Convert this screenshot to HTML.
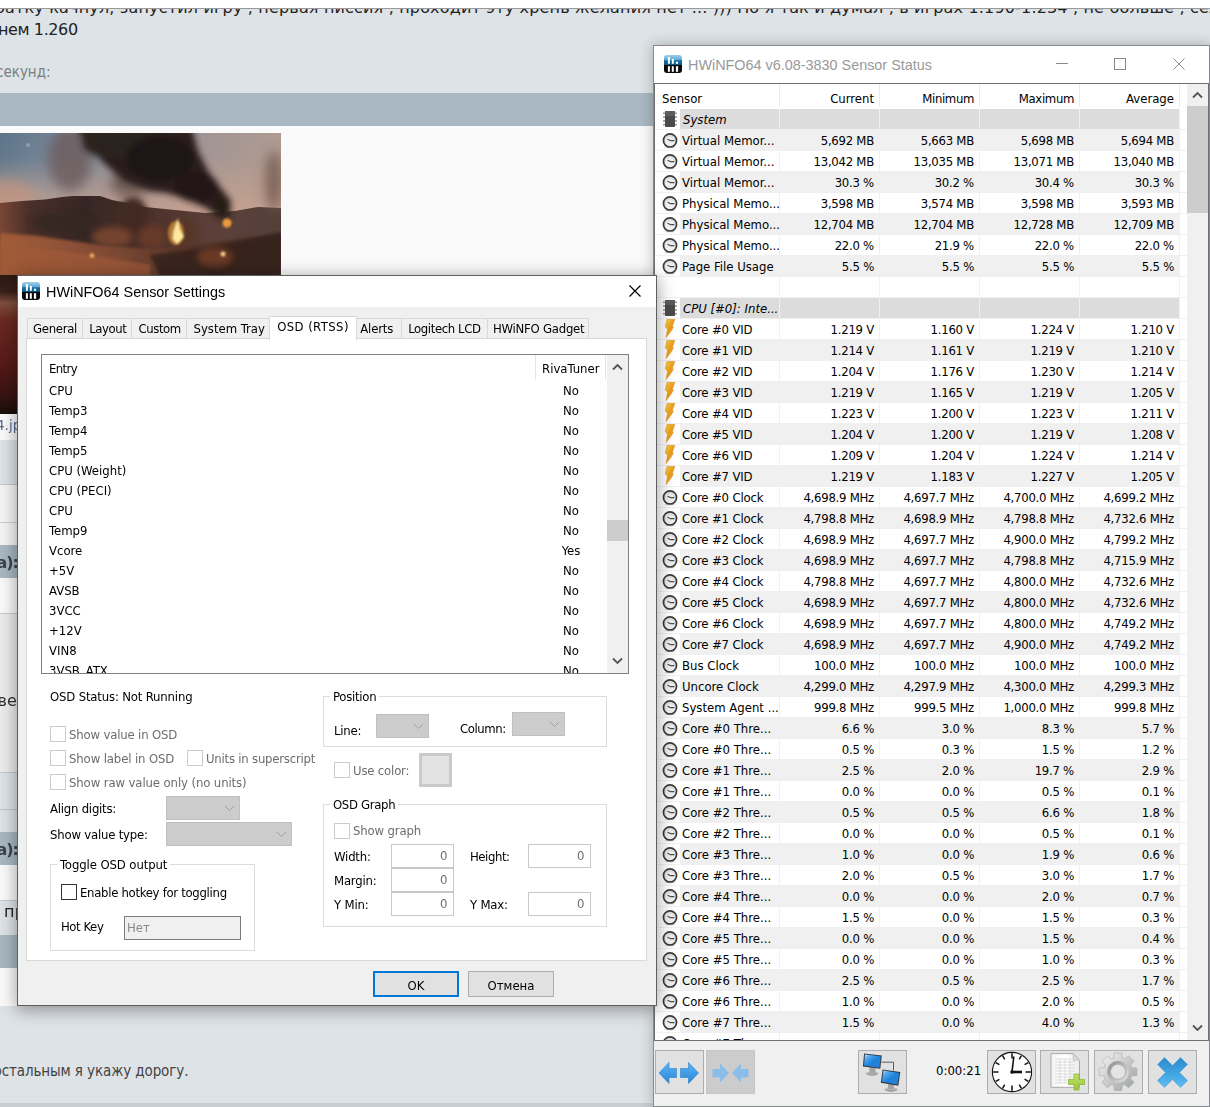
<!DOCTYPE html>
<html lang="ru"><head><meta charset="utf-8"><title>HWiNFO64</title>
<style>
*{box-sizing:border-box;margin:0;padding:0}
html,body{width:1210px;height:1107px;overflow:hidden;background:#dee3e7}
body{position:relative;font-family:"DejaVu Sans Condensed","Liberation Sans",sans-serif;font-size:13px;color:#000}
.a{position:absolute}
.t{position:absolute;white-space:pre;line-height:16px;height:16px}
.f{font-family:"DejaVu Sans","Liberation Sans",sans-serif;font-size:16px;letter-spacing:.17px;color:#333}
.ui{font-family:"DejaVu Sans Condensed","Liberation Sans",sans-serif;font-size:13px}
.f2{font-family:"DejaVu Sans Condensed","Liberation Sans",sans-serif;font-size:15px;color:#333}
/* right window */
#rw{left:653px;top:45px;width:557px;height:1062px;background:#fff;border:1px solid #868a8e;box-shadow:0 0 12px 1px rgba(0,0,0,.22)}
.row{position:absolute;left:26px;height:20px;width:499px}
.cell{position:absolute;top:0;height:20px}
.v{position:absolute;white-space:pre;line-height:16px;height:16px;text-align:right;width:94px;letter-spacing:-.25px}
.btn{position:absolute;top:1050px;height:44px;border:1px solid #adadad;background:#e1e1e1}
/* dialog */
#dlg{left:17px;top:275px;width:640px;height:731px;background:#f0f0f0;border:1px solid #5f5f5f;box-shadow:0 3px 16px 1px rgba(0,0,0,.36)}
.tab{position:absolute;top:318px;height:21px;border:1px solid #d9d9d9;border-bottom:none;background:#f0f0f0}
.cb{position:absolute;width:16px;height:16px;border:1px solid #ccc;background:#fff}
.gb{position:absolute;border:1px solid #dcdcdc}
.cmb{position:absolute;background:#ccc;border:1px solid #bfbfbf}
.inp{position:absolute;border:1px solid #c8c8c8;background:#fff}
.dis{color:#6d6d6d}
.ttl{font-family:"Liberation Sans","DejaVu Sans",sans-serif;font-size:14.4px;line-height:18px;height:18px}
</style></head>
<body>
<div class="a" style="left:0;top:0;width:1210px;height:9px;background:#fff"></div>
<div class="a" style="left:0;top:8px;width:1210px;height:1px;background:#9a9a9a"></div>
<div class="a" style="left:0;top:9px;width:1210px;height:14px;overflow:hidden"><div class="t f" style="left:-5px;top:-11px;line-height:20px;height:20px;color:#222">батку качнул, запустил игру , первая писсия , проходит эту хрень желания нет ... ))) Но я так и думал , в играх 1.190-1.234 , не больше , сел</div></div>
<div class="t f" style="left:-2px;top:20px;line-height:20px;height:20px;letter-spacing:-.4px;color:#222">нем 1.260</div>
<div class="t f2" style="left:-4px;top:62px;line-height:20px;height:20px;color:#7b7f83">секунд:</div>
<div class="a" style="left:0;top:93px;width:654px;height:33px;background:#a9b8c2"></div>
<div class="a" style="left:0;top:126px;width:654px;height:880px;background:#fafafa"></div>
<div class="a" id="img" style="left:0;top:133px;width:281px;height:282px;overflow:hidden;background:#6b4a3c"><svg width="281" height="282" viewBox="0 0 281 282"><defs>
<linearGradient id="sky" x1="0" y1="0" x2="1" y2=".2"><stop offset="0" stop-color="#5d7489"/><stop offset=".3" stop-color="#7f8c9b"/><stop offset=".6" stop-color="#9b9296"/><stop offset="1" stop-color="#b09b91"/></linearGradient>
<linearGradient id="hz" x1="0" y1="0" x2="0" y2="1"><stop offset="0" stop-color="#c3a08f" stop-opacity="0"/><stop offset="1" stop-color="#c5a08e" stop-opacity=".9"/></linearGradient>
<linearGradient id="gr" x1="0" y1="0" x2="1" y2="0"><stop offset="0" stop-color="#a25c39"/><stop offset=".4" stop-color="#7e4a35"/><stop offset=".7" stop-color="#4e3026"/><stop offset="1" stop-color="#3d2820"/></linearGradient>
<linearGradient id="mt" x1="0" y1="0" x2="1" y2="0"><stop offset="0" stop-color="#7a4636"/><stop offset=".1" stop-color="#4b302a"/><stop offset=".3" stop-color="#352624"/><stop offset=".5" stop-color="#4a3029"/><stop offset=".75" stop-color="#5c4039"/><stop offset="1" stop-color="#54403a"/></linearGradient>
<linearGradient id="strip" x1="0" y1="0" x2="0" y2="1"><stop offset="0" stop-color="#2c1a14"/><stop offset=".12" stop-color="#3a2018"/><stop offset=".2" stop-color="#7e4f3d"/><stop offset=".32" stop-color="#6a2a22"/><stop offset=".6" stop-color="#5a1b18"/><stop offset=".85" stop-color="#3a1412"/><stop offset="1" stop-color="#170d0b"/></linearGradient>
<filter id="bl" x="-30%" y="-30%" width="160%" height="160%"><feGaussianBlur stdDeviation="3"/></filter>
<filter id="bl2" x="-30%" y="-30%" width="160%" height="160%"><feGaussianBlur stdDeviation="1.6"/></filter>
<filter id="bl3" x="-50%" y="-50%" width="200%" height="200%"><feGaussianBlur stdDeviation=".9"/></filter>
<filter id="bl5" x="-30%" y="-30%" width="160%" height="160%"><feGaussianBlur stdDeviation="6"/></filter>
</defs>
<rect width="281" height="90" fill="url(#sky)"/>
<rect y="25" width="281" height="55" fill="url(#hz)"/>
<ellipse cx="0" cy="62" rx="36" ry="16" fill="#c9957e" opacity=".6" filter="url(#bl5)"/>
<path d="M0 70L22 68L45 66.5L62 64L72 63H100L112 67L128 70L145 74L175 77L205 80L235 78L258 74L281 75V120H0Z" fill="url(#mt)"/>
<path d="M0 100L40 103L100 112L150 116L200 112L281 100V143H0Z" fill="url(#gr)" filter="url(#bl2)"/>
<path d="M0 110L70 119L150 132L150 143H0Z" fill="#a05a38" opacity=".7" filter="url(#bl2)"/>
<path d="M150 122L215 114L281 100V143H160Z" fill="#35221c" opacity=".85" filter="url(#bl2)"/>
<g filter="url(#bl5)"><ellipse cx="70" cy="26" rx="22" ry="32" fill="#6a5a5a" opacity=".8"/><ellipse cx="130" cy="50" rx="20" ry="14" fill="#5a4640" opacity=".7"/><ellipse cx="274" cy="48" rx="9" ry="30" fill="#735950" opacity=".8"/></g>
<g filter="url(#bl)">
<path d="M76 -5L192 -5L198 18L208 38L220 54L231 68L230 84L218 84L208 76L186 66L166 60L150 58L124 48L106 32L90 16Z" fill="#2a1f1c"/>
<ellipse cx="118" cy="10" rx="36" ry="16" fill="#2c211e"/>
<ellipse cx="160" cy="26" rx="34" ry="22" fill="#1f1715"/>
<ellipse cx="196" cy="54" rx="22" ry="15" fill="#211815"/>
<ellipse cx="222" cy="74" rx="8" ry="12" fill="#281c18"/>
<ellipse cx="133" cy="84" rx="15" ry="20" fill="#432a22"/>
<ellipse cx="112" cy="104" rx="20" ry="10" fill="#7a4530" opacity=".9"/>
<ellipse cx="152" cy="104" rx="14" ry="12" fill="#6a3b29" opacity=".9"/>
<ellipse cx="180" cy="100" rx="16" ry="14" fill="#583323" opacity=".8"/>
<ellipse cx="215" cy="124" rx="18" ry="10" fill="#764028" opacity=".8"/>
<ellipse cx="60" cy="90" rx="30" ry="10" fill="#33241f" opacity=".8"/>
</g>
<g filter="url(#bl3)"><ellipse cx="176" cy="100" rx="8" ry="12" fill="#d9983f" opacity=".7"/><path d="M173.500 98L178 85L180 96L184 104L177 111L172.500 106Z" fill="#ffe9a0"/><circle cx="227" cy="90" r="4.500" fill="#ee9a3c"/><circle cx="92" cy="122.500" r="2.200" fill="#f7b468"/><circle cx="223" cy="121" r="2.500" fill="#fbc98a"/><circle cx="28" cy="12" r="1.200" fill="#dfe8f0"/></g>
<rect x="0" y="142" width="281" height="140" fill="url(#strip)"/>
</svg></div>
<div class="a" style="left:0;top:414px;width:30px;height:26px;background:#fafafa"></div>
<div class="a" style="left:0;top:440px;width:30px;height:44px;background:#dee3e7"></div>
<div class="a" style="left:0;top:484px;width:30px;height:1px;background:#c9c9c9"></div>
<div class="a" style="left:0;top:485px;width:30px;height:37px;background:#f5f5f5"></div>
<div class="a" style="left:0;top:522px;width:30px;height:1px;background:#d0d0d0"></div>
<div class="a" style="left:0;top:523px;width:30px;height:22px;background:#f5f5f5"></div>
<div class="a" style="left:0;top:545px;width:30px;height:33px;background:#a9b8c2"></div>
<div class="a" style="left:0;top:578px;width:30px;height:35px;background:#fafafa"></div>
<div class="a" style="left:0;top:613px;width:30px;height:1px;background:#c9c9c9"></div>
<div class="a" style="left:0;top:614px;width:30px;height:158px;background:#ececec"></div>
<div class="a" style="left:0;top:772px;width:30px;height:1px;background:#c0c6cb"></div>
<div class="a" style="left:0;top:773px;width:30px;height:36px;background:#dee3e7"></div>
<div class="a" style="left:0;top:809px;width:30px;height:1px;background:#c0c6cb"></div>
<div class="a" style="left:0;top:810px;width:30px;height:22px;background:#dee3e7"></div>
<div class="a" style="left:0;top:832px;width:30px;height:33px;background:#a9b8c2"></div>
<div class="a" style="left:0;top:865px;width:30px;height:35px;background:#fafafa"></div>
<div class="a" style="left:0;top:900px;width:30px;height:1px;background:#c9c9c9"></div>
<div class="a" style="left:0;top:901px;width:30px;height:34px;background:#dee3e7"></div>
<div class="a" style="left:0;top:935px;width:30px;height:33px;background:#a9b8c2"></div>
<div class="a" style="left:0;top:968px;width:30px;height:38px;background:#fafafa"></div>
<div class="t f" style="left:-4px;top:415px;line-height:20px;height:20px;font-size:13.5px;letter-spacing:0;color:#56688c">4.jpg</div>
<div class="t f" style="left:-3.500px;top:552.500px;line-height:20px;height:20px;font-weight:bold;letter-spacing:-1px;color:#3a4650">а):</div>
<div class="t f" style="left:-2.500px;top:691px;line-height:20px;height:20px;color:#333">вел</div>
<div class="t f" style="left:-3.500px;top:839.500px;line-height:20px;height:20px;font-weight:bold;letter-spacing:-1px;color:#3a4650">а):</div>
<div class="t f" style="left:4px;top:902px;line-height:20px;height:20px;color:#222">пр</div>
<div class="a" style="left:0;top:1006px;width:654px;height:101px;background:#dee3e7"></div>
<div class="a" style="left:0;top:1103px;width:1210px;height:4px;background:#c8cdd2"></div>
<div class="t f2" style="left:-6.5px;top:1061px;line-height:20px;height:20px;letter-spacing:-.1px;color:#444">остальным я укажу дорогу.</div>
<div class="a" id="rw">
<div class="a" style="left:10px;top:9px;width:18px;height:18px" id="ico1"><svg width="18" height="18" viewBox="0 0 18 18"><defs><linearGradient id="ag1" x1="0" y1="0" x2="0" y2="1"><stop offset="0" stop-color="#9fcde6"/><stop offset=".52" stop-color="#5aa6d2"/><stop offset=".56" stop-color="#0f6fa0"/><stop offset="1" stop-color="#0a5c8c"/></linearGradient><clipPath id="ac1"><rect x="0" y="0" width="18" height="18" rx="3" ry="3"/></clipPath></defs><g clip-path="url(#ac1)"><rect width="18" height="10" fill="url(#ag1)"/><rect y="9.9" width="18" height="8.1" fill="#0a0a0a"/><rect x="3.9" y="1.9" width="2" height="6.9" fill="#fff"/><rect x="7.8" y="4" width="2" height="4.8" fill="#fff"/><rect x="11.9" y="6.7" width="2.2" height="2.1" fill="#fff"/><rect x="3.9" y="11.2" width="2" height="5.6" fill="#fff"/><rect x="7.8" y="11.2" width="2" height="5.6" fill="#fff"/><rect x="11.9" y="11.2" width="2.2" height="5.6" fill="#fff"/></g></svg></div>
<div class="t ttl" style="left:34px;top:10px;color:#999">HWiNFO64 v6.08-3830 Sensor Status</div>
<div class="a" style="left:402px;top:17px;width:12px;height:1px;background:#8a8a8a"></div>
<div class="a" style="left:460px;top:12px;width:12px;height:12px;border:1px solid #8a8a8a"></div>
<svg class="a" style="left:519px;top:12px" width="12" height="12" viewBox="0 0 12 12"><path d="M0.5 0.5L11.5 11.5M11.5 0.5L0.5 11.5" stroke="#8a8a8a" stroke-width="1" fill="none"/></svg>
<div class="a" style="left:0;top:37px;width:555px;height:958px;border:1px solid #6f6f6f"></div>
<div class="t ui" style="left:8px;top:45px;">Sensor</div>
<div class="v" style="left:126px;top:45px;letter-spacing:0px">Current</div>
<div class="v" style="left:226px;top:45px;letter-spacing:-0.35px">Minimum</div>
<div class="v" style="left:326px;top:45px;letter-spacing:-0.35px">Maximum</div>
<div class="v" style="left:426px;top:45px;letter-spacing:0px">Average</div>
<div class="a" style="left:125px;top:38px;width:1px;height:24px;background:#ebebeb"></div>
<div class="a" style="left:225px;top:38px;width:1px;height:24px;background:#ebebeb"></div>
<div class="a" style="left:325px;top:38px;width:1px;height:24px;background:#ebebeb"></div>
<div class="a" style="left:425px;top:38px;width:1px;height:24px;background:#ebebeb"></div>
<div class="a" style="left:525px;top:38px;width:1px;height:24px;background:#ebebeb"></div>
<div class="a" style="left:26px;top:63px;width:500px;height:20px;background:#dcdcdc"></div>
<div class="a" style="left:1px;top:83px;width:532px;height:1px;background:#f0f0f0"></div>
<div class="a" style="left:0;top:63px;width:534px;height:20px;overflow:hidden">
<div class="a" style="left:8px;top:1px;width:16px;height:18px"><svg width="16" height="18" viewBox="0 0 16 18"><g fill="#9a9a9a"><rect x="1" y="2.5" width="14" height="1.6"/><rect x="1" y="6.3" width="14" height="1.6"/><rect x="1" y="10.1" width="14" height="1.6"/><rect x="1" y="13.9" width="14" height="1.6"/></g><rect x="3" y="1" width="10" height="16" rx=".8" fill="#4a4a4a"/><rect x="3" y="1" width="10" height="5" rx=".8" fill="#5c5c5c"/></svg></div>
<div class="t" style="left:29px;top:3px;font-style:italic">System</div>
</div>
<div class="a" style="left:26px;top:84px;width:500px;height:20px;background:#f0f0f0"></div>
<div class="a" style="left:1px;top:104px;width:532px;height:1px;background:#f0f0f0"></div>
<div class="a" style="left:0;top:84px;width:534px;height:20px;overflow:hidden">
<div class="a" style="left:8px;top:2px;width:16px;height:17px"><svg width="16" height="17" viewBox="0 0 16 17"><ellipse cx="8" cy="15.4" rx="5.5" ry="1" fill="#000" opacity=".12"/><circle cx="8" cy="8.4" r="6.55" fill="#dcdfe2" stroke="#3a3a3a" stroke-width="1.7"/><circle cx="8" cy="9.6" r="4.6" fill="#efefef"/><path d="M8.2 8.5L5.5 7.2M8.2 8.6H12.3" stroke="#4a4a4a" stroke-width="1.1" fill="none"/></svg></div>
<div class="t" style="left:28px;top:3px">Virtual Memor...</div>
<div class="v" style="left:126px;top:3px">5,692 MB</div>
<div class="v" style="left:226px;top:3px">5,663 MB</div>
<div class="v" style="left:326px;top:3px">5,698 MB</div>
<div class="v" style="left:426px;top:3px">5,694 MB</div>
</div>
<div class="a" style="left:1px;top:125px;width:532px;height:1px;background:#f0f0f0"></div>
<div class="a" style="left:0;top:105px;width:534px;height:20px;overflow:hidden">
<div class="a" style="left:8px;top:2px;width:16px;height:17px"><svg width="16" height="17" viewBox="0 0 16 17"><ellipse cx="8" cy="15.4" rx="5.5" ry="1" fill="#000" opacity=".12"/><circle cx="8" cy="8.4" r="6.55" fill="#dcdfe2" stroke="#3a3a3a" stroke-width="1.7"/><circle cx="8" cy="9.6" r="4.6" fill="#efefef"/><path d="M8.2 8.5L5.5 7.2M8.2 8.6H12.3" stroke="#4a4a4a" stroke-width="1.1" fill="none"/></svg></div>
<div class="t" style="left:28px;top:3px">Virtual Memor...</div>
<div class="v" style="left:126px;top:3px">13,042 MB</div>
<div class="v" style="left:226px;top:3px">13,035 MB</div>
<div class="v" style="left:326px;top:3px">13,071 MB</div>
<div class="v" style="left:426px;top:3px">13,040 MB</div>
</div>
<div class="a" style="left:26px;top:126px;width:500px;height:20px;background:#f0f0f0"></div>
<div class="a" style="left:1px;top:146px;width:532px;height:1px;background:#f0f0f0"></div>
<div class="a" style="left:0;top:126px;width:534px;height:20px;overflow:hidden">
<div class="a" style="left:8px;top:2px;width:16px;height:17px"><svg width="16" height="17" viewBox="0 0 16 17"><ellipse cx="8" cy="15.4" rx="5.5" ry="1" fill="#000" opacity=".12"/><circle cx="8" cy="8.4" r="6.55" fill="#dcdfe2" stroke="#3a3a3a" stroke-width="1.7"/><circle cx="8" cy="9.6" r="4.6" fill="#efefef"/><path d="M8.2 8.5L5.5 7.2M8.2 8.6H12.3" stroke="#4a4a4a" stroke-width="1.1" fill="none"/></svg></div>
<div class="t" style="left:28px;top:3px">Virtual Memor...</div>
<div class="v" style="left:126px;top:3px">30.3 %</div>
<div class="v" style="left:226px;top:3px">30.2 %</div>
<div class="v" style="left:326px;top:3px">30.4 %</div>
<div class="v" style="left:426px;top:3px">30.3 %</div>
</div>
<div class="a" style="left:1px;top:167px;width:532px;height:1px;background:#f0f0f0"></div>
<div class="a" style="left:0;top:147px;width:534px;height:20px;overflow:hidden">
<div class="a" style="left:8px;top:2px;width:16px;height:17px"><svg width="16" height="17" viewBox="0 0 16 17"><ellipse cx="8" cy="15.4" rx="5.5" ry="1" fill="#000" opacity=".12"/><circle cx="8" cy="8.4" r="6.55" fill="#dcdfe2" stroke="#3a3a3a" stroke-width="1.7"/><circle cx="8" cy="9.6" r="4.6" fill="#efefef"/><path d="M8.2 8.5L5.5 7.2M8.2 8.6H12.3" stroke="#4a4a4a" stroke-width="1.1" fill="none"/></svg></div>
<div class="t" style="left:28px;top:3px">Physical Memo...</div>
<div class="v" style="left:126px;top:3px">3,598 MB</div>
<div class="v" style="left:226px;top:3px">3,574 MB</div>
<div class="v" style="left:326px;top:3px">3,598 MB</div>
<div class="v" style="left:426px;top:3px">3,593 MB</div>
</div>
<div class="a" style="left:26px;top:168px;width:500px;height:20px;background:#f0f0f0"></div>
<div class="a" style="left:1px;top:188px;width:532px;height:1px;background:#f0f0f0"></div>
<div class="a" style="left:0;top:168px;width:534px;height:20px;overflow:hidden">
<div class="a" style="left:8px;top:2px;width:16px;height:17px"><svg width="16" height="17" viewBox="0 0 16 17"><ellipse cx="8" cy="15.4" rx="5.5" ry="1" fill="#000" opacity=".12"/><circle cx="8" cy="8.4" r="6.55" fill="#dcdfe2" stroke="#3a3a3a" stroke-width="1.7"/><circle cx="8" cy="9.6" r="4.6" fill="#efefef"/><path d="M8.2 8.5L5.5 7.2M8.2 8.6H12.3" stroke="#4a4a4a" stroke-width="1.1" fill="none"/></svg></div>
<div class="t" style="left:28px;top:3px">Physical Memo...</div>
<div class="v" style="left:126px;top:3px">12,704 MB</div>
<div class="v" style="left:226px;top:3px">12,704 MB</div>
<div class="v" style="left:326px;top:3px">12,728 MB</div>
<div class="v" style="left:426px;top:3px">12,709 MB</div>
</div>
<div class="a" style="left:1px;top:209px;width:532px;height:1px;background:#f0f0f0"></div>
<div class="a" style="left:0;top:189px;width:534px;height:20px;overflow:hidden">
<div class="a" style="left:8px;top:2px;width:16px;height:17px"><svg width="16" height="17" viewBox="0 0 16 17"><ellipse cx="8" cy="15.4" rx="5.5" ry="1" fill="#000" opacity=".12"/><circle cx="8" cy="8.4" r="6.55" fill="#dcdfe2" stroke="#3a3a3a" stroke-width="1.7"/><circle cx="8" cy="9.6" r="4.6" fill="#efefef"/><path d="M8.2 8.5L5.5 7.2M8.2 8.6H12.3" stroke="#4a4a4a" stroke-width="1.1" fill="none"/></svg></div>
<div class="t" style="left:28px;top:3px">Physical Memo...</div>
<div class="v" style="left:126px;top:3px">22.0 %</div>
<div class="v" style="left:226px;top:3px">21.9 %</div>
<div class="v" style="left:326px;top:3px">22.0 %</div>
<div class="v" style="left:426px;top:3px">22.0 %</div>
</div>
<div class="a" style="left:26px;top:210px;width:500px;height:20px;background:#f0f0f0"></div>
<div class="a" style="left:1px;top:230px;width:532px;height:1px;background:#f0f0f0"></div>
<div class="a" style="left:0;top:210px;width:534px;height:20px;overflow:hidden">
<div class="a" style="left:8px;top:2px;width:16px;height:17px"><svg width="16" height="17" viewBox="0 0 16 17"><ellipse cx="8" cy="15.4" rx="5.5" ry="1" fill="#000" opacity=".12"/><circle cx="8" cy="8.4" r="6.55" fill="#dcdfe2" stroke="#3a3a3a" stroke-width="1.7"/><circle cx="8" cy="9.6" r="4.6" fill="#efefef"/><path d="M8.2 8.5L5.5 7.2M8.2 8.6H12.3" stroke="#4a4a4a" stroke-width="1.1" fill="none"/></svg></div>
<div class="t" style="left:28px;top:3px">Page File Usage</div>
<div class="v" style="left:126px;top:3px">5.5 %</div>
<div class="v" style="left:226px;top:3px">5.5 %</div>
<div class="v" style="left:326px;top:3px">5.5 %</div>
<div class="v" style="left:426px;top:3px">5.5 %</div>
</div>
<div class="a" style="left:1px;top:251px;width:532px;height:1px;background:#f0f0f0"></div>
<div class="a" style="left:0;top:231px;width:534px;height:20px;overflow:hidden">
</div>
<div class="a" style="left:26px;top:252px;width:500px;height:20px;background:#dcdcdc"></div>
<div class="a" style="left:1px;top:272px;width:532px;height:1px;background:#f0f0f0"></div>
<div class="a" style="left:0;top:252px;width:534px;height:20px;overflow:hidden">
<div class="a" style="left:8px;top:1px;width:16px;height:18px"><svg width="16" height="18" viewBox="0 0 16 18"><g fill="#9a9a9a"><rect x="1" y="2.5" width="14" height="1.6"/><rect x="1" y="6.3" width="14" height="1.6"/><rect x="1" y="10.1" width="14" height="1.6"/><rect x="1" y="13.9" width="14" height="1.6"/></g><rect x="3" y="1" width="10" height="16" rx=".8" fill="#4a4a4a"/><rect x="3" y="1" width="10" height="5" rx=".8" fill="#5c5c5c"/></svg></div>
<div class="t" style="left:29px;top:3px;font-style:italic">CPU [#0]: Inte...</div>
</div>
<div class="a" style="left:1px;top:293px;width:532px;height:1px;background:#f0f0f0"></div>
<div class="a" style="left:0;top:273px;width:534px;height:20px;overflow:hidden">
<div class="a" style="left:8px;top:0px;width:16px;height:20px"><svg width="16" height="20" viewBox="0 0 16 20"><defs><linearGradient id="bg10" x1="0" y1="0" x2="1" y2="1"><stop offset="0" stop-color="#fbd743"/><stop offset=".5" stop-color="#ee9a1c"/><stop offset="1" stop-color="#f5c535"/></linearGradient></defs><path d="M5 .3H12.8L10.3 7.6L11.5 8L9 12.2L4 18.6L5.5 10.3L3.3 7.8Z" fill="url(#bg10)" stroke="#d58a1e" stroke-width=".5"/></svg></div>
<div class="t" style="left:28px;top:3px;letter-spacing:-.16px">Core #0 VID</div>
<div class="v" style="left:126px;top:3px">1.219 V</div>
<div class="v" style="left:226px;top:3px">1.160 V</div>
<div class="v" style="left:326px;top:3px">1.224 V</div>
<div class="v" style="left:426px;top:3px">1.210 V</div>
</div>
<div class="a" style="left:26px;top:294px;width:500px;height:20px;background:#f0f0f0"></div>
<div class="a" style="left:1px;top:314px;width:532px;height:1px;background:#f0f0f0"></div>
<div class="a" style="left:0;top:294px;width:534px;height:20px;overflow:hidden">
<div class="a" style="left:8px;top:0px;width:16px;height:20px"><svg width="16" height="20" viewBox="0 0 16 20"><defs><linearGradient id="bg11" x1="0" y1="0" x2="1" y2="1"><stop offset="0" stop-color="#fbd743"/><stop offset=".5" stop-color="#ee9a1c"/><stop offset="1" stop-color="#f5c535"/></linearGradient></defs><path d="M5 .3H12.8L10.3 7.6L11.5 8L9 12.2L4 18.6L5.5 10.3L3.3 7.8Z" fill="url(#bg11)" stroke="#d58a1e" stroke-width=".5"/></svg></div>
<div class="t" style="left:28px;top:3px;letter-spacing:-.16px">Core #1 VID</div>
<div class="v" style="left:126px;top:3px">1.214 V</div>
<div class="v" style="left:226px;top:3px">1.161 V</div>
<div class="v" style="left:326px;top:3px">1.219 V</div>
<div class="v" style="left:426px;top:3px">1.210 V</div>
</div>
<div class="a" style="left:1px;top:335px;width:532px;height:1px;background:#f0f0f0"></div>
<div class="a" style="left:0;top:315px;width:534px;height:20px;overflow:hidden">
<div class="a" style="left:8px;top:0px;width:16px;height:20px"><svg width="16" height="20" viewBox="0 0 16 20"><defs><linearGradient id="bg12" x1="0" y1="0" x2="1" y2="1"><stop offset="0" stop-color="#fbd743"/><stop offset=".5" stop-color="#ee9a1c"/><stop offset="1" stop-color="#f5c535"/></linearGradient></defs><path d="M5 .3H12.8L10.3 7.6L11.5 8L9 12.2L4 18.6L5.5 10.3L3.3 7.8Z" fill="url(#bg12)" stroke="#d58a1e" stroke-width=".5"/></svg></div>
<div class="t" style="left:28px;top:3px;letter-spacing:-.16px">Core #2 VID</div>
<div class="v" style="left:126px;top:3px">1.204 V</div>
<div class="v" style="left:226px;top:3px">1.176 V</div>
<div class="v" style="left:326px;top:3px">1.230 V</div>
<div class="v" style="left:426px;top:3px">1.214 V</div>
</div>
<div class="a" style="left:26px;top:336px;width:500px;height:20px;background:#f0f0f0"></div>
<div class="a" style="left:1px;top:356px;width:532px;height:1px;background:#f0f0f0"></div>
<div class="a" style="left:0;top:336px;width:534px;height:20px;overflow:hidden">
<div class="a" style="left:8px;top:0px;width:16px;height:20px"><svg width="16" height="20" viewBox="0 0 16 20"><defs><linearGradient id="bg13" x1="0" y1="0" x2="1" y2="1"><stop offset="0" stop-color="#fbd743"/><stop offset=".5" stop-color="#ee9a1c"/><stop offset="1" stop-color="#f5c535"/></linearGradient></defs><path d="M5 .3H12.8L10.3 7.6L11.5 8L9 12.2L4 18.6L5.5 10.3L3.3 7.8Z" fill="url(#bg13)" stroke="#d58a1e" stroke-width=".5"/></svg></div>
<div class="t" style="left:28px;top:3px;letter-spacing:-.16px">Core #3 VID</div>
<div class="v" style="left:126px;top:3px">1.219 V</div>
<div class="v" style="left:226px;top:3px">1.165 V</div>
<div class="v" style="left:326px;top:3px">1.219 V</div>
<div class="v" style="left:426px;top:3px">1.205 V</div>
</div>
<div class="a" style="left:1px;top:377px;width:532px;height:1px;background:#f0f0f0"></div>
<div class="a" style="left:0;top:357px;width:534px;height:20px;overflow:hidden">
<div class="a" style="left:8px;top:0px;width:16px;height:20px"><svg width="16" height="20" viewBox="0 0 16 20"><defs><linearGradient id="bg14" x1="0" y1="0" x2="1" y2="1"><stop offset="0" stop-color="#fbd743"/><stop offset=".5" stop-color="#ee9a1c"/><stop offset="1" stop-color="#f5c535"/></linearGradient></defs><path d="M5 .3H12.8L10.3 7.6L11.5 8L9 12.2L4 18.6L5.5 10.3L3.3 7.8Z" fill="url(#bg14)" stroke="#d58a1e" stroke-width=".5"/></svg></div>
<div class="t" style="left:28px;top:3px;letter-spacing:-.16px">Core #4 VID</div>
<div class="v" style="left:126px;top:3px">1.223 V</div>
<div class="v" style="left:226px;top:3px">1.200 V</div>
<div class="v" style="left:326px;top:3px">1.223 V</div>
<div class="v" style="left:426px;top:3px">1.211 V</div>
</div>
<div class="a" style="left:26px;top:378px;width:500px;height:20px;background:#f0f0f0"></div>
<div class="a" style="left:1px;top:398px;width:532px;height:1px;background:#f0f0f0"></div>
<div class="a" style="left:0;top:378px;width:534px;height:20px;overflow:hidden">
<div class="a" style="left:8px;top:0px;width:16px;height:20px"><svg width="16" height="20" viewBox="0 0 16 20"><defs><linearGradient id="bg15" x1="0" y1="0" x2="1" y2="1"><stop offset="0" stop-color="#fbd743"/><stop offset=".5" stop-color="#ee9a1c"/><stop offset="1" stop-color="#f5c535"/></linearGradient></defs><path d="M5 .3H12.8L10.3 7.6L11.5 8L9 12.2L4 18.6L5.5 10.3L3.3 7.8Z" fill="url(#bg15)" stroke="#d58a1e" stroke-width=".5"/></svg></div>
<div class="t" style="left:28px;top:3px;letter-spacing:-.16px">Core #5 VID</div>
<div class="v" style="left:126px;top:3px">1.204 V</div>
<div class="v" style="left:226px;top:3px">1.200 V</div>
<div class="v" style="left:326px;top:3px">1.219 V</div>
<div class="v" style="left:426px;top:3px">1.208 V</div>
</div>
<div class="a" style="left:1px;top:419px;width:532px;height:1px;background:#f0f0f0"></div>
<div class="a" style="left:0;top:399px;width:534px;height:20px;overflow:hidden">
<div class="a" style="left:8px;top:0px;width:16px;height:20px"><svg width="16" height="20" viewBox="0 0 16 20"><defs><linearGradient id="bg16" x1="0" y1="0" x2="1" y2="1"><stop offset="0" stop-color="#fbd743"/><stop offset=".5" stop-color="#ee9a1c"/><stop offset="1" stop-color="#f5c535"/></linearGradient></defs><path d="M5 .3H12.8L10.3 7.6L11.5 8L9 12.2L4 18.6L5.5 10.3L3.3 7.8Z" fill="url(#bg16)" stroke="#d58a1e" stroke-width=".5"/></svg></div>
<div class="t" style="left:28px;top:3px;letter-spacing:-.16px">Core #6 VID</div>
<div class="v" style="left:126px;top:3px">1.209 V</div>
<div class="v" style="left:226px;top:3px">1.204 V</div>
<div class="v" style="left:326px;top:3px">1.224 V</div>
<div class="v" style="left:426px;top:3px">1.214 V</div>
</div>
<div class="a" style="left:26px;top:420px;width:500px;height:20px;background:#f0f0f0"></div>
<div class="a" style="left:1px;top:440px;width:532px;height:1px;background:#f0f0f0"></div>
<div class="a" style="left:0;top:420px;width:534px;height:20px;overflow:hidden">
<div class="a" style="left:8px;top:0px;width:16px;height:20px"><svg width="16" height="20" viewBox="0 0 16 20"><defs><linearGradient id="bg17" x1="0" y1="0" x2="1" y2="1"><stop offset="0" stop-color="#fbd743"/><stop offset=".5" stop-color="#ee9a1c"/><stop offset="1" stop-color="#f5c535"/></linearGradient></defs><path d="M5 .3H12.8L10.3 7.6L11.5 8L9 12.2L4 18.6L5.5 10.3L3.3 7.8Z" fill="url(#bg17)" stroke="#d58a1e" stroke-width=".5"/></svg></div>
<div class="t" style="left:28px;top:3px;letter-spacing:-.16px">Core #7 VID</div>
<div class="v" style="left:126px;top:3px">1.219 V</div>
<div class="v" style="left:226px;top:3px">1.183 V</div>
<div class="v" style="left:326px;top:3px">1.227 V</div>
<div class="v" style="left:426px;top:3px">1.205 V</div>
</div>
<div class="a" style="left:1px;top:461px;width:532px;height:1px;background:#f0f0f0"></div>
<div class="a" style="left:0;top:441px;width:534px;height:20px;overflow:hidden">
<div class="a" style="left:8px;top:2px;width:16px;height:17px"><svg width="16" height="17" viewBox="0 0 16 17"><ellipse cx="8" cy="15.4" rx="5.5" ry="1" fill="#000" opacity=".12"/><circle cx="8" cy="8.4" r="6.55" fill="#dcdfe2" stroke="#3a3a3a" stroke-width="1.7"/><circle cx="8" cy="9.6" r="4.6" fill="#efefef"/><path d="M8.2 8.5L5.5 7.2M8.2 8.6H12.3" stroke="#4a4a4a" stroke-width="1.1" fill="none"/></svg></div>
<div class="t" style="left:28px;top:3px;letter-spacing:-.16px">Core #0 Clock</div>
<div class="v" style="left:126px;top:3px">4,698.9 MHz</div>
<div class="v" style="left:226px;top:3px">4,697.7 MHz</div>
<div class="v" style="left:326px;top:3px">4,700.0 MHz</div>
<div class="v" style="left:426px;top:3px">4,699.2 MHz</div>
</div>
<div class="a" style="left:26px;top:462px;width:500px;height:20px;background:#f0f0f0"></div>
<div class="a" style="left:1px;top:482px;width:532px;height:1px;background:#f0f0f0"></div>
<div class="a" style="left:0;top:462px;width:534px;height:20px;overflow:hidden">
<div class="a" style="left:8px;top:2px;width:16px;height:17px"><svg width="16" height="17" viewBox="0 0 16 17"><ellipse cx="8" cy="15.4" rx="5.5" ry="1" fill="#000" opacity=".12"/><circle cx="8" cy="8.4" r="6.55" fill="#dcdfe2" stroke="#3a3a3a" stroke-width="1.7"/><circle cx="8" cy="9.6" r="4.6" fill="#efefef"/><path d="M8.2 8.5L5.5 7.2M8.2 8.6H12.3" stroke="#4a4a4a" stroke-width="1.1" fill="none"/></svg></div>
<div class="t" style="left:28px;top:3px;letter-spacing:-.16px">Core #1 Clock</div>
<div class="v" style="left:126px;top:3px">4,798.8 MHz</div>
<div class="v" style="left:226px;top:3px">4,698.9 MHz</div>
<div class="v" style="left:326px;top:3px">4,798.8 MHz</div>
<div class="v" style="left:426px;top:3px">4,732.6 MHz</div>
</div>
<div class="a" style="left:1px;top:503px;width:532px;height:1px;background:#f0f0f0"></div>
<div class="a" style="left:0;top:483px;width:534px;height:20px;overflow:hidden">
<div class="a" style="left:8px;top:2px;width:16px;height:17px"><svg width="16" height="17" viewBox="0 0 16 17"><ellipse cx="8" cy="15.4" rx="5.5" ry="1" fill="#000" opacity=".12"/><circle cx="8" cy="8.4" r="6.55" fill="#dcdfe2" stroke="#3a3a3a" stroke-width="1.7"/><circle cx="8" cy="9.6" r="4.6" fill="#efefef"/><path d="M8.2 8.5L5.5 7.2M8.2 8.6H12.3" stroke="#4a4a4a" stroke-width="1.1" fill="none"/></svg></div>
<div class="t" style="left:28px;top:3px;letter-spacing:-.16px">Core #2 Clock</div>
<div class="v" style="left:126px;top:3px">4,698.9 MHz</div>
<div class="v" style="left:226px;top:3px">4,697.7 MHz</div>
<div class="v" style="left:326px;top:3px">4,900.0 MHz</div>
<div class="v" style="left:426px;top:3px">4,799.2 MHz</div>
</div>
<div class="a" style="left:26px;top:504px;width:500px;height:20px;background:#f0f0f0"></div>
<div class="a" style="left:1px;top:524px;width:532px;height:1px;background:#f0f0f0"></div>
<div class="a" style="left:0;top:504px;width:534px;height:20px;overflow:hidden">
<div class="a" style="left:8px;top:2px;width:16px;height:17px"><svg width="16" height="17" viewBox="0 0 16 17"><ellipse cx="8" cy="15.4" rx="5.5" ry="1" fill="#000" opacity=".12"/><circle cx="8" cy="8.4" r="6.55" fill="#dcdfe2" stroke="#3a3a3a" stroke-width="1.7"/><circle cx="8" cy="9.6" r="4.6" fill="#efefef"/><path d="M8.2 8.5L5.5 7.2M8.2 8.6H12.3" stroke="#4a4a4a" stroke-width="1.1" fill="none"/></svg></div>
<div class="t" style="left:28px;top:3px;letter-spacing:-.16px">Core #3 Clock</div>
<div class="v" style="left:126px;top:3px">4,698.9 MHz</div>
<div class="v" style="left:226px;top:3px">4,697.7 MHz</div>
<div class="v" style="left:326px;top:3px">4,798.8 MHz</div>
<div class="v" style="left:426px;top:3px">4,715.9 MHz</div>
</div>
<div class="a" style="left:1px;top:545px;width:532px;height:1px;background:#f0f0f0"></div>
<div class="a" style="left:0;top:525px;width:534px;height:20px;overflow:hidden">
<div class="a" style="left:8px;top:2px;width:16px;height:17px"><svg width="16" height="17" viewBox="0 0 16 17"><ellipse cx="8" cy="15.4" rx="5.5" ry="1" fill="#000" opacity=".12"/><circle cx="8" cy="8.4" r="6.55" fill="#dcdfe2" stroke="#3a3a3a" stroke-width="1.7"/><circle cx="8" cy="9.6" r="4.6" fill="#efefef"/><path d="M8.2 8.5L5.5 7.2M8.2 8.6H12.3" stroke="#4a4a4a" stroke-width="1.1" fill="none"/></svg></div>
<div class="t" style="left:28px;top:3px;letter-spacing:-.16px">Core #4 Clock</div>
<div class="v" style="left:126px;top:3px">4,798.8 MHz</div>
<div class="v" style="left:226px;top:3px">4,697.7 MHz</div>
<div class="v" style="left:326px;top:3px">4,800.0 MHz</div>
<div class="v" style="left:426px;top:3px">4,732.6 MHz</div>
</div>
<div class="a" style="left:26px;top:546px;width:500px;height:20px;background:#f0f0f0"></div>
<div class="a" style="left:1px;top:566px;width:532px;height:1px;background:#f0f0f0"></div>
<div class="a" style="left:0;top:546px;width:534px;height:20px;overflow:hidden">
<div class="a" style="left:8px;top:2px;width:16px;height:17px"><svg width="16" height="17" viewBox="0 0 16 17"><ellipse cx="8" cy="15.4" rx="5.5" ry="1" fill="#000" opacity=".12"/><circle cx="8" cy="8.4" r="6.55" fill="#dcdfe2" stroke="#3a3a3a" stroke-width="1.7"/><circle cx="8" cy="9.6" r="4.6" fill="#efefef"/><path d="M8.2 8.5L5.5 7.2M8.2 8.6H12.3" stroke="#4a4a4a" stroke-width="1.1" fill="none"/></svg></div>
<div class="t" style="left:28px;top:3px;letter-spacing:-.16px">Core #5 Clock</div>
<div class="v" style="left:126px;top:3px">4,698.9 MHz</div>
<div class="v" style="left:226px;top:3px">4,697.7 MHz</div>
<div class="v" style="left:326px;top:3px">4,800.0 MHz</div>
<div class="v" style="left:426px;top:3px">4,732.6 MHz</div>
</div>
<div class="a" style="left:1px;top:587px;width:532px;height:1px;background:#f0f0f0"></div>
<div class="a" style="left:0;top:567px;width:534px;height:20px;overflow:hidden">
<div class="a" style="left:8px;top:2px;width:16px;height:17px"><svg width="16" height="17" viewBox="0 0 16 17"><ellipse cx="8" cy="15.4" rx="5.5" ry="1" fill="#000" opacity=".12"/><circle cx="8" cy="8.4" r="6.55" fill="#dcdfe2" stroke="#3a3a3a" stroke-width="1.7"/><circle cx="8" cy="9.6" r="4.6" fill="#efefef"/><path d="M8.2 8.5L5.5 7.2M8.2 8.6H12.3" stroke="#4a4a4a" stroke-width="1.1" fill="none"/></svg></div>
<div class="t" style="left:28px;top:3px;letter-spacing:-.16px">Core #6 Clock</div>
<div class="v" style="left:126px;top:3px">4,698.9 MHz</div>
<div class="v" style="left:226px;top:3px">4,697.7 MHz</div>
<div class="v" style="left:326px;top:3px">4,800.0 MHz</div>
<div class="v" style="left:426px;top:3px">4,749.2 MHz</div>
</div>
<div class="a" style="left:26px;top:588px;width:500px;height:20px;background:#f0f0f0"></div>
<div class="a" style="left:1px;top:608px;width:532px;height:1px;background:#f0f0f0"></div>
<div class="a" style="left:0;top:588px;width:534px;height:20px;overflow:hidden">
<div class="a" style="left:8px;top:2px;width:16px;height:17px"><svg width="16" height="17" viewBox="0 0 16 17"><ellipse cx="8" cy="15.4" rx="5.5" ry="1" fill="#000" opacity=".12"/><circle cx="8" cy="8.4" r="6.55" fill="#dcdfe2" stroke="#3a3a3a" stroke-width="1.7"/><circle cx="8" cy="9.6" r="4.6" fill="#efefef"/><path d="M8.2 8.5L5.5 7.2M8.2 8.6H12.3" stroke="#4a4a4a" stroke-width="1.1" fill="none"/></svg></div>
<div class="t" style="left:28px;top:3px;letter-spacing:-.16px">Core #7 Clock</div>
<div class="v" style="left:126px;top:3px">4,698.9 MHz</div>
<div class="v" style="left:226px;top:3px">4,697.7 MHz</div>
<div class="v" style="left:326px;top:3px">4,900.0 MHz</div>
<div class="v" style="left:426px;top:3px">4,749.2 MHz</div>
</div>
<div class="a" style="left:1px;top:629px;width:532px;height:1px;background:#f0f0f0"></div>
<div class="a" style="left:0;top:609px;width:534px;height:20px;overflow:hidden">
<div class="a" style="left:8px;top:2px;width:16px;height:17px"><svg width="16" height="17" viewBox="0 0 16 17"><ellipse cx="8" cy="15.4" rx="5.5" ry="1" fill="#000" opacity=".12"/><circle cx="8" cy="8.4" r="6.55" fill="#dcdfe2" stroke="#3a3a3a" stroke-width="1.7"/><circle cx="8" cy="9.6" r="4.6" fill="#efefef"/><path d="M8.2 8.5L5.5 7.2M8.2 8.6H12.3" stroke="#4a4a4a" stroke-width="1.1" fill="none"/></svg></div>
<div class="t" style="left:28px;top:3px">Bus Clock</div>
<div class="v" style="left:126px;top:3px">100.0 MHz</div>
<div class="v" style="left:226px;top:3px">100.0 MHz</div>
<div class="v" style="left:326px;top:3px">100.0 MHz</div>
<div class="v" style="left:426px;top:3px">100.0 MHz</div>
</div>
<div class="a" style="left:26px;top:630px;width:500px;height:20px;background:#f0f0f0"></div>
<div class="a" style="left:1px;top:650px;width:532px;height:1px;background:#f0f0f0"></div>
<div class="a" style="left:0;top:630px;width:534px;height:20px;overflow:hidden">
<div class="a" style="left:8px;top:2px;width:16px;height:17px"><svg width="16" height="17" viewBox="0 0 16 17"><ellipse cx="8" cy="15.4" rx="5.5" ry="1" fill="#000" opacity=".12"/><circle cx="8" cy="8.4" r="6.55" fill="#dcdfe2" stroke="#3a3a3a" stroke-width="1.7"/><circle cx="8" cy="9.6" r="4.6" fill="#efefef"/><path d="M8.2 8.5L5.5 7.2M8.2 8.6H12.3" stroke="#4a4a4a" stroke-width="1.1" fill="none"/></svg></div>
<div class="t" style="left:28px;top:3px">Uncore Clock</div>
<div class="v" style="left:126px;top:3px">4,299.0 MHz</div>
<div class="v" style="left:226px;top:3px">4,297.9 MHz</div>
<div class="v" style="left:326px;top:3px">4,300.0 MHz</div>
<div class="v" style="left:426px;top:3px">4,299.3 MHz</div>
</div>
<div class="a" style="left:1px;top:671px;width:532px;height:1px;background:#f0f0f0"></div>
<div class="a" style="left:0;top:651px;width:534px;height:20px;overflow:hidden">
<div class="a" style="left:8px;top:2px;width:16px;height:17px"><svg width="16" height="17" viewBox="0 0 16 17"><ellipse cx="8" cy="15.4" rx="5.5" ry="1" fill="#000" opacity=".12"/><circle cx="8" cy="8.4" r="6.55" fill="#dcdfe2" stroke="#3a3a3a" stroke-width="1.7"/><circle cx="8" cy="9.6" r="4.6" fill="#efefef"/><path d="M8.2 8.5L5.5 7.2M8.2 8.6H12.3" stroke="#4a4a4a" stroke-width="1.1" fill="none"/></svg></div>
<div class="t" style="left:28px;top:3px">System Agent ...</div>
<div class="v" style="left:126px;top:3px">999.8 MHz</div>
<div class="v" style="left:226px;top:3px">999.5 MHz</div>
<div class="v" style="left:326px;top:3px">1,000.0 MHz</div>
<div class="v" style="left:426px;top:3px">999.8 MHz</div>
</div>
<div class="a" style="left:26px;top:672px;width:500px;height:20px;background:#f0f0f0"></div>
<div class="a" style="left:1px;top:692px;width:532px;height:1px;background:#f0f0f0"></div>
<div class="a" style="left:0;top:672px;width:534px;height:20px;overflow:hidden">
<div class="a" style="left:8px;top:2px;width:16px;height:17px"><svg width="16" height="17" viewBox="0 0 16 17"><ellipse cx="8" cy="15.4" rx="5.5" ry="1" fill="#000" opacity=".12"/><circle cx="8" cy="8.4" r="6.55" fill="#dcdfe2" stroke="#3a3a3a" stroke-width="1.7"/><circle cx="8" cy="9.6" r="4.6" fill="#efefef"/><path d="M8.2 8.5L5.5 7.2M8.2 8.6H12.3" stroke="#4a4a4a" stroke-width="1.1" fill="none"/></svg></div>
<div class="t" style="left:28px;top:3px">Core #0 Thre...</div>
<div class="v" style="left:126px;top:3px">6.6 %</div>
<div class="v" style="left:226px;top:3px">3.0 %</div>
<div class="v" style="left:326px;top:3px">8.3 %</div>
<div class="v" style="left:426px;top:3px">5.7 %</div>
</div>
<div class="a" style="left:1px;top:713px;width:532px;height:1px;background:#f0f0f0"></div>
<div class="a" style="left:0;top:693px;width:534px;height:20px;overflow:hidden">
<div class="a" style="left:8px;top:2px;width:16px;height:17px"><svg width="16" height="17" viewBox="0 0 16 17"><ellipse cx="8" cy="15.4" rx="5.5" ry="1" fill="#000" opacity=".12"/><circle cx="8" cy="8.4" r="6.55" fill="#dcdfe2" stroke="#3a3a3a" stroke-width="1.7"/><circle cx="8" cy="9.6" r="4.6" fill="#efefef"/><path d="M8.2 8.5L5.5 7.2M8.2 8.6H12.3" stroke="#4a4a4a" stroke-width="1.1" fill="none"/></svg></div>
<div class="t" style="left:28px;top:3px">Core #0 Thre...</div>
<div class="v" style="left:126px;top:3px">0.5 %</div>
<div class="v" style="left:226px;top:3px">0.3 %</div>
<div class="v" style="left:326px;top:3px">1.5 %</div>
<div class="v" style="left:426px;top:3px">1.2 %</div>
</div>
<div class="a" style="left:26px;top:714px;width:500px;height:20px;background:#f0f0f0"></div>
<div class="a" style="left:1px;top:734px;width:532px;height:1px;background:#f0f0f0"></div>
<div class="a" style="left:0;top:714px;width:534px;height:20px;overflow:hidden">
<div class="a" style="left:8px;top:2px;width:16px;height:17px"><svg width="16" height="17" viewBox="0 0 16 17"><ellipse cx="8" cy="15.4" rx="5.5" ry="1" fill="#000" opacity=".12"/><circle cx="8" cy="8.4" r="6.55" fill="#dcdfe2" stroke="#3a3a3a" stroke-width="1.7"/><circle cx="8" cy="9.6" r="4.6" fill="#efefef"/><path d="M8.2 8.5L5.5 7.2M8.2 8.6H12.3" stroke="#4a4a4a" stroke-width="1.1" fill="none"/></svg></div>
<div class="t" style="left:28px;top:3px">Core #1 Thre...</div>
<div class="v" style="left:126px;top:3px">2.5 %</div>
<div class="v" style="left:226px;top:3px">2.0 %</div>
<div class="v" style="left:326px;top:3px">19.7 %</div>
<div class="v" style="left:426px;top:3px">2.9 %</div>
</div>
<div class="a" style="left:1px;top:755px;width:532px;height:1px;background:#f0f0f0"></div>
<div class="a" style="left:0;top:735px;width:534px;height:20px;overflow:hidden">
<div class="a" style="left:8px;top:2px;width:16px;height:17px"><svg width="16" height="17" viewBox="0 0 16 17"><ellipse cx="8" cy="15.4" rx="5.5" ry="1" fill="#000" opacity=".12"/><circle cx="8" cy="8.4" r="6.55" fill="#dcdfe2" stroke="#3a3a3a" stroke-width="1.7"/><circle cx="8" cy="9.6" r="4.6" fill="#efefef"/><path d="M8.2 8.5L5.5 7.2M8.2 8.6H12.3" stroke="#4a4a4a" stroke-width="1.1" fill="none"/></svg></div>
<div class="t" style="left:28px;top:3px">Core #1 Thre...</div>
<div class="v" style="left:126px;top:3px">0.0 %</div>
<div class="v" style="left:226px;top:3px">0.0 %</div>
<div class="v" style="left:326px;top:3px">0.5 %</div>
<div class="v" style="left:426px;top:3px">0.1 %</div>
</div>
<div class="a" style="left:26px;top:756px;width:500px;height:20px;background:#f0f0f0"></div>
<div class="a" style="left:1px;top:776px;width:532px;height:1px;background:#f0f0f0"></div>
<div class="a" style="left:0;top:756px;width:534px;height:20px;overflow:hidden">
<div class="a" style="left:8px;top:2px;width:16px;height:17px"><svg width="16" height="17" viewBox="0 0 16 17"><ellipse cx="8" cy="15.4" rx="5.5" ry="1" fill="#000" opacity=".12"/><circle cx="8" cy="8.4" r="6.55" fill="#dcdfe2" stroke="#3a3a3a" stroke-width="1.7"/><circle cx="8" cy="9.6" r="4.6" fill="#efefef"/><path d="M8.2 8.5L5.5 7.2M8.2 8.6H12.3" stroke="#4a4a4a" stroke-width="1.1" fill="none"/></svg></div>
<div class="t" style="left:28px;top:3px">Core #2 Thre...</div>
<div class="v" style="left:126px;top:3px">0.5 %</div>
<div class="v" style="left:226px;top:3px">0.5 %</div>
<div class="v" style="left:326px;top:3px">6.6 %</div>
<div class="v" style="left:426px;top:3px">1.8 %</div>
</div>
<div class="a" style="left:1px;top:797px;width:532px;height:1px;background:#f0f0f0"></div>
<div class="a" style="left:0;top:777px;width:534px;height:20px;overflow:hidden">
<div class="a" style="left:8px;top:2px;width:16px;height:17px"><svg width="16" height="17" viewBox="0 0 16 17"><ellipse cx="8" cy="15.4" rx="5.5" ry="1" fill="#000" opacity=".12"/><circle cx="8" cy="8.4" r="6.55" fill="#dcdfe2" stroke="#3a3a3a" stroke-width="1.7"/><circle cx="8" cy="9.6" r="4.6" fill="#efefef"/><path d="M8.2 8.5L5.5 7.2M8.2 8.6H12.3" stroke="#4a4a4a" stroke-width="1.1" fill="none"/></svg></div>
<div class="t" style="left:28px;top:3px">Core #2 Thre...</div>
<div class="v" style="left:126px;top:3px">0.0 %</div>
<div class="v" style="left:226px;top:3px">0.0 %</div>
<div class="v" style="left:326px;top:3px">0.5 %</div>
<div class="v" style="left:426px;top:3px">0.1 %</div>
</div>
<div class="a" style="left:26px;top:798px;width:500px;height:20px;background:#f0f0f0"></div>
<div class="a" style="left:1px;top:818px;width:532px;height:1px;background:#f0f0f0"></div>
<div class="a" style="left:0;top:798px;width:534px;height:20px;overflow:hidden">
<div class="a" style="left:8px;top:2px;width:16px;height:17px"><svg width="16" height="17" viewBox="0 0 16 17"><ellipse cx="8" cy="15.4" rx="5.5" ry="1" fill="#000" opacity=".12"/><circle cx="8" cy="8.4" r="6.55" fill="#dcdfe2" stroke="#3a3a3a" stroke-width="1.7"/><circle cx="8" cy="9.6" r="4.6" fill="#efefef"/><path d="M8.2 8.5L5.5 7.2M8.2 8.6H12.3" stroke="#4a4a4a" stroke-width="1.1" fill="none"/></svg></div>
<div class="t" style="left:28px;top:3px">Core #3 Thre...</div>
<div class="v" style="left:126px;top:3px">1.0 %</div>
<div class="v" style="left:226px;top:3px">0.0 %</div>
<div class="v" style="left:326px;top:3px">1.9 %</div>
<div class="v" style="left:426px;top:3px">0.6 %</div>
</div>
<div class="a" style="left:1px;top:839px;width:532px;height:1px;background:#f0f0f0"></div>
<div class="a" style="left:0;top:819px;width:534px;height:20px;overflow:hidden">
<div class="a" style="left:8px;top:2px;width:16px;height:17px"><svg width="16" height="17" viewBox="0 0 16 17"><ellipse cx="8" cy="15.4" rx="5.5" ry="1" fill="#000" opacity=".12"/><circle cx="8" cy="8.4" r="6.55" fill="#dcdfe2" stroke="#3a3a3a" stroke-width="1.7"/><circle cx="8" cy="9.6" r="4.6" fill="#efefef"/><path d="M8.2 8.5L5.5 7.2M8.2 8.6H12.3" stroke="#4a4a4a" stroke-width="1.1" fill="none"/></svg></div>
<div class="t" style="left:28px;top:3px">Core #3 Thre...</div>
<div class="v" style="left:126px;top:3px">2.0 %</div>
<div class="v" style="left:226px;top:3px">0.5 %</div>
<div class="v" style="left:326px;top:3px">3.0 %</div>
<div class="v" style="left:426px;top:3px">1.7 %</div>
</div>
<div class="a" style="left:26px;top:840px;width:500px;height:20px;background:#f0f0f0"></div>
<div class="a" style="left:1px;top:860px;width:532px;height:1px;background:#f0f0f0"></div>
<div class="a" style="left:0;top:840px;width:534px;height:20px;overflow:hidden">
<div class="a" style="left:8px;top:2px;width:16px;height:17px"><svg width="16" height="17" viewBox="0 0 16 17"><ellipse cx="8" cy="15.4" rx="5.5" ry="1" fill="#000" opacity=".12"/><circle cx="8" cy="8.4" r="6.55" fill="#dcdfe2" stroke="#3a3a3a" stroke-width="1.7"/><circle cx="8" cy="9.6" r="4.6" fill="#efefef"/><path d="M8.2 8.5L5.5 7.2M8.2 8.6H12.3" stroke="#4a4a4a" stroke-width="1.1" fill="none"/></svg></div>
<div class="t" style="left:28px;top:3px">Core #4 Thre...</div>
<div class="v" style="left:126px;top:3px">0.0 %</div>
<div class="v" style="left:226px;top:3px">0.0 %</div>
<div class="v" style="left:326px;top:3px">2.0 %</div>
<div class="v" style="left:426px;top:3px">0.7 %</div>
</div>
<div class="a" style="left:1px;top:881px;width:532px;height:1px;background:#f0f0f0"></div>
<div class="a" style="left:0;top:861px;width:534px;height:20px;overflow:hidden">
<div class="a" style="left:8px;top:2px;width:16px;height:17px"><svg width="16" height="17" viewBox="0 0 16 17"><ellipse cx="8" cy="15.4" rx="5.5" ry="1" fill="#000" opacity=".12"/><circle cx="8" cy="8.4" r="6.55" fill="#dcdfe2" stroke="#3a3a3a" stroke-width="1.7"/><circle cx="8" cy="9.6" r="4.6" fill="#efefef"/><path d="M8.2 8.5L5.5 7.2M8.2 8.6H12.3" stroke="#4a4a4a" stroke-width="1.1" fill="none"/></svg></div>
<div class="t" style="left:28px;top:3px">Core #4 Thre...</div>
<div class="v" style="left:126px;top:3px">1.5 %</div>
<div class="v" style="left:226px;top:3px">0.0 %</div>
<div class="v" style="left:326px;top:3px">1.5 %</div>
<div class="v" style="left:426px;top:3px">0.3 %</div>
</div>
<div class="a" style="left:26px;top:882px;width:500px;height:20px;background:#f0f0f0"></div>
<div class="a" style="left:1px;top:902px;width:532px;height:1px;background:#f0f0f0"></div>
<div class="a" style="left:0;top:882px;width:534px;height:20px;overflow:hidden">
<div class="a" style="left:8px;top:2px;width:16px;height:17px"><svg width="16" height="17" viewBox="0 0 16 17"><ellipse cx="8" cy="15.4" rx="5.5" ry="1" fill="#000" opacity=".12"/><circle cx="8" cy="8.4" r="6.55" fill="#dcdfe2" stroke="#3a3a3a" stroke-width="1.7"/><circle cx="8" cy="9.6" r="4.6" fill="#efefef"/><path d="M8.2 8.5L5.5 7.2M8.2 8.6H12.3" stroke="#4a4a4a" stroke-width="1.1" fill="none"/></svg></div>
<div class="t" style="left:28px;top:3px">Core #5 Thre...</div>
<div class="v" style="left:126px;top:3px">0.0 %</div>
<div class="v" style="left:226px;top:3px">0.0 %</div>
<div class="v" style="left:326px;top:3px">1.5 %</div>
<div class="v" style="left:426px;top:3px">0.4 %</div>
</div>
<div class="a" style="left:1px;top:923px;width:532px;height:1px;background:#f0f0f0"></div>
<div class="a" style="left:0;top:903px;width:534px;height:20px;overflow:hidden">
<div class="a" style="left:8px;top:2px;width:16px;height:17px"><svg width="16" height="17" viewBox="0 0 16 17"><ellipse cx="8" cy="15.4" rx="5.5" ry="1" fill="#000" opacity=".12"/><circle cx="8" cy="8.4" r="6.55" fill="#dcdfe2" stroke="#3a3a3a" stroke-width="1.7"/><circle cx="8" cy="9.6" r="4.6" fill="#efefef"/><path d="M8.2 8.5L5.5 7.2M8.2 8.6H12.3" stroke="#4a4a4a" stroke-width="1.1" fill="none"/></svg></div>
<div class="t" style="left:28px;top:3px">Core #5 Thre...</div>
<div class="v" style="left:126px;top:3px">0.0 %</div>
<div class="v" style="left:226px;top:3px">0.0 %</div>
<div class="v" style="left:326px;top:3px">1.0 %</div>
<div class="v" style="left:426px;top:3px">0.3 %</div>
</div>
<div class="a" style="left:26px;top:924px;width:500px;height:20px;background:#f0f0f0"></div>
<div class="a" style="left:1px;top:944px;width:532px;height:1px;background:#f0f0f0"></div>
<div class="a" style="left:0;top:924px;width:534px;height:20px;overflow:hidden">
<div class="a" style="left:8px;top:2px;width:16px;height:17px"><svg width="16" height="17" viewBox="0 0 16 17"><ellipse cx="8" cy="15.4" rx="5.5" ry="1" fill="#000" opacity=".12"/><circle cx="8" cy="8.4" r="6.55" fill="#dcdfe2" stroke="#3a3a3a" stroke-width="1.7"/><circle cx="8" cy="9.6" r="4.6" fill="#efefef"/><path d="M8.2 8.5L5.5 7.2M8.2 8.6H12.3" stroke="#4a4a4a" stroke-width="1.1" fill="none"/></svg></div>
<div class="t" style="left:28px;top:3px">Core #6 Thre...</div>
<div class="v" style="left:126px;top:3px">2.5 %</div>
<div class="v" style="left:226px;top:3px">0.5 %</div>
<div class="v" style="left:326px;top:3px">2.5 %</div>
<div class="v" style="left:426px;top:3px">1.7 %</div>
</div>
<div class="a" style="left:1px;top:965px;width:532px;height:1px;background:#f0f0f0"></div>
<div class="a" style="left:0;top:945px;width:534px;height:20px;overflow:hidden">
<div class="a" style="left:8px;top:2px;width:16px;height:17px"><svg width="16" height="17" viewBox="0 0 16 17"><ellipse cx="8" cy="15.4" rx="5.5" ry="1" fill="#000" opacity=".12"/><circle cx="8" cy="8.4" r="6.55" fill="#dcdfe2" stroke="#3a3a3a" stroke-width="1.7"/><circle cx="8" cy="9.6" r="4.6" fill="#efefef"/><path d="M8.2 8.5L5.5 7.2M8.2 8.6H12.3" stroke="#4a4a4a" stroke-width="1.1" fill="none"/></svg></div>
<div class="t" style="left:28px;top:3px">Core #6 Thre...</div>
<div class="v" style="left:126px;top:3px">1.0 %</div>
<div class="v" style="left:226px;top:3px">0.0 %</div>
<div class="v" style="left:326px;top:3px">2.0 %</div>
<div class="v" style="left:426px;top:3px">0.5 %</div>
</div>
<div class="a" style="left:26px;top:966px;width:500px;height:20px;background:#f0f0f0"></div>
<div class="a" style="left:1px;top:986px;width:532px;height:1px;background:#f0f0f0"></div>
<div class="a" style="left:0;top:966px;width:534px;height:20px;overflow:hidden">
<div class="a" style="left:8px;top:2px;width:16px;height:17px"><svg width="16" height="17" viewBox="0 0 16 17"><ellipse cx="8" cy="15.4" rx="5.5" ry="1" fill="#000" opacity=".12"/><circle cx="8" cy="8.4" r="6.55" fill="#dcdfe2" stroke="#3a3a3a" stroke-width="1.7"/><circle cx="8" cy="9.6" r="4.6" fill="#efefef"/><path d="M8.2 8.5L5.5 7.2M8.2 8.6H12.3" stroke="#4a4a4a" stroke-width="1.1" fill="none"/></svg></div>
<div class="t" style="left:28px;top:3px">Core #7 Thre...</div>
<div class="v" style="left:126px;top:3px">1.5 %</div>
<div class="v" style="left:226px;top:3px">0.0 %</div>
<div class="v" style="left:326px;top:3px">4.0 %</div>
<div class="v" style="left:426px;top:3px">1.3 %</div>
</div>
<div class="a" style="left:0;top:987px;width:534px;height:7px;overflow:hidden">
<div class="a" style="left:8px;top:2px;width:16px;height:17px"><svg width="16" height="17" viewBox="0 0 16 17"><ellipse cx="8" cy="15.4" rx="5.5" ry="1" fill="#000" opacity=".12"/><circle cx="8" cy="8.4" r="6.55" fill="#dcdfe2" stroke="#3a3a3a" stroke-width="1.7"/><circle cx="8" cy="9.6" r="4.6" fill="#efefef"/><path d="M8.2 8.5L5.5 7.2M8.2 8.6H12.3" stroke="#4a4a4a" stroke-width="1.1" fill="none"/></svg></div>
<div class="t" style="left:28px;top:3px">Core #7 Thre...</div>
<div class="v" style="left:126px;top:3px"></div>
<div class="v" style="left:226px;top:3px"></div>
<div class="v" style="left:326px;top:3px"></div>
<div class="v" style="left:426px;top:3px"></div>
</div>
<div class="a" style="left:125px;top:63px;width:1px;height:931px;background:#f0f0f0"></div>
<div class="a" style="left:225px;top:63px;width:1px;height:931px;background:#f0f0f0"></div>
<div class="a" style="left:325px;top:63px;width:1px;height:931px;background:#f0f0f0"></div>
<div class="a" style="left:425px;top:63px;width:1px;height:931px;background:#f0f0f0"></div>
<div class="a" style="left:525px;top:63px;width:1px;height:931px;background:#f0f0f0"></div>
<div class="a" style="left:533px;top:38px;width:21px;height:956px;background:#f0f0f0"></div>
<div class="a" style="left:533px;top:60px;width:21px;height:107px;background:#cdcdcd"></div>
<svg class="a" style="left:538px;top:45px" width="11" height="8" viewBox="0 0 11 8"><path d="M1 6.5L5.5 2L10 6.5" stroke="#555" stroke-width="1.8" fill="none"/></svg>
<svg class="a" style="left:538px;top:978px" width="11" height="8" viewBox="0 0 11 8"><path d="M1 1.5L5.5 6L10 1.5" stroke="#555" stroke-width="1.8" fill="none"/></svg>
<div class="a" style="left:0;top:995px;width:555px;height:65px;background:#f0f0f0"></div>
<div class="btn" id="b1" style="left:1px;top:1004px;width:49px;background:#e1e1e1"><svg width="46" height="42" viewBox="0 0 46 42"><defs><linearGradient id="ar1" x1="0" y1="0" x2="0" y2="1"><stop offset="0" stop-color="#5bb4f3"/><stop offset="1" stop-color="#2a86d8"/></linearGradient></defs><path d="M3 22L13 11.5V17.5H20.5V26.5H13V32.5Z" fill="url(#ar1)" stroke="#2a7fd0" stroke-width=".6"/><path d="M42.5 22L32.5 11.5V17.5H24.5V26.5H32.5V32.5Z" fill="url(#ar1)" stroke="#2a7fd0" stroke-width=".6"/></svg></div>
<div class="btn" id="b2" style="left:52px;top:1004px;width:49px;background:#cccccc;border-color:#c6c6c6"><svg width="47" height="42" viewBox="0 0 47 42"><path d="M22 22L13 12.5V18H5.5V26.5H13V31.5Z" fill="#8bbde8"/><path d="M25 22L34 12.5V18H41.5V26.5H34V31.5Z" fill="#8bbde8"/></svg></div>
<div class="btn" id="b3" style="left:204px;top:1004px;width:49px;background:#e1e1e1"><svg width="47" height="42" viewBox="0 0 47 42"><defs><linearGradient id="mo1" x1="0" y1="0" x2=".9" y2="1"><stop offset="0" stop-color="#cfe6f8"/><stop offset=".22" stop-color="#58aaf0"/><stop offset=".55" stop-color="#1f83dc"/><stop offset="1" stop-color="#2a7fd0"/></linearGradient><linearGradient id="ms1" x1="0" y1="0" x2="0" y2="1"><stop offset="0" stop-color="#d5d5d5"/><stop offset="1" stop-color="#8e8e8e"/></linearGradient></defs><path d="M22.500 11.200H34.500V19.500" stroke="#5c5c5c" stroke-width="1" fill="none"/><ellipse cx="13.200" cy="22.300" rx="6.200" ry="2.300" fill="url(#ms1)"/><path d="M10.500 16L16.500 17V22H10.500Z" fill="#a5a5a5"/><path d="M5.100 2.400L22.800 4.400L21.300 17.800L3.900 15.500Z" fill="#2f3a44"/><path d="M6 3.500L21.700 5.300L20.400 16.700L5 14.600Z" fill="url(#mo1)"/><ellipse cx="32" cy="38.400" rx="6.400" ry="2.300" fill="url(#ms1)"/><path d="M29 32L35 33V38H29Z" fill="#a5a5a5"/><path d="M23.600 18.500L41.300 21.100L39.300 34.700L21.800 31.700Z" fill="#2f3a44"/><path d="M24.500 19.600L40.200 22L38.400 33.500L22.900 30.800Z" fill="url(#mo1)"/></svg></div>
<div class="btn" id="b4" style="left:333px;top:1004px;width:49px;background:#e1e1e1"><div style="margin-left:3px"><svg width="42" height="42" viewBox="-1 -1 42 42"><circle cx="20" cy="20" r="19.6" fill="#fff" stroke="#111" stroke-width="1.1"/><path d="M20.0 6.5L20.0 1.2M27.2 7.4L29.4 3.7M32.6 12.7L36.3 10.6M33.5 20.0L38.8 20.0M32.6 27.2L36.3 29.4M27.2 32.6L29.4 36.3M20.0 33.5L20.0 38.8M12.7 32.6L10.6 36.3M7.4 27.3L3.7 29.4M6.5 20.0L1.2 20.0M7.4 12.7L3.7 10.6M12.7 7.4L10.6 3.7" stroke="#111" stroke-width="1.5" fill="none"/><path d="M20 20L21.8 4.5" stroke="#111" stroke-width="1.6"/><path d="M19 20H30" stroke="#111" stroke-width="2.6"/><circle cx="20" cy="20" r="1.8" fill="#111"/></svg></div></div>
<div class="btn" id="b5" style="left:386px;top:1004px;width:49px;background:#e1e1e1"><svg width="47" height="42" viewBox="0 0 47 42"><defs><linearGradient id="dg1" x1="0" y1="0" x2="1" y2="0"><stop offset="0" stop-color="#f4f4f4"/><stop offset=".5" stop-color="#ffffff"/><stop offset="1" stop-color="#ececec"/></linearGradient><linearGradient id="pl1" x1="0" y1="0" x2="0" y2="1"><stop offset="0" stop-color="#bfe068"/><stop offset="1" stop-color="#9cc63c"/></linearGradient></defs><path d="M10 2.600H32L38.500 9V36.300H10Z" fill="url(#dg1)" stroke="#a9a9a9" stroke-width="1"/><path d="M32 3V9.5H39Z" fill="#d8d8d8" stroke="#bdbdbd" stroke-width=".6"/><path d="M14 8H30M14 11H34M14 14H34M14 17H34M14 20H34M14 23H34M14 26H34M14 29H34M14 32H34M19 8V32M24 8V32M29 8V32" stroke="#d0d0d0" stroke-width=".7" fill="none"/><path d="M33 23H38V28.5H43.5V33.5H38V39H33V33.5H27.5V28.5H33Z" fill="url(#pl1)" stroke="#86b32a" stroke-width=".7"/></svg></div>
<div class="btn" id="b6" style="left:440px;top:1004px;width:49px;background:#e1e1e1"><svg width="47" height="42" viewBox="0 0 47 42"><defs><linearGradient id="gg1" x1="0" y1="0" x2="1" y2="1"><stop offset="0" stop-color="#f4f5f5"/><stop offset=".5" stop-color="#c9cbcb"/><stop offset="1" stop-color="#9b9e9e"/></linearGradient><linearGradient id="gg2" x1="0" y1="0" x2="1" y2="1"><stop offset="0" stop-color="#8a8a8a"/><stop offset="1" stop-color="#e8e8e8"/></linearGradient></defs><path d="M19.2 2.0L26.8 2.0L27.2 7.2L29.6 8.2L33.6 4.8L39.0 10.2L35.6 14.2L36.6 16.6L41.8 17.0L41.8 24.6L36.6 25.0L35.6 27.4L39.0 31.4L33.6 36.8L29.6 33.4L27.2 34.4L26.8 39.6L19.2 39.6L18.8 34.4L16.4 33.4L12.4 36.8L7.0 31.4L10.4 27.4L9.4 25.0L4.2 24.6L4.2 17.0L9.4 16.6L10.4 14.2L7.0 10.2L12.4 4.8L16.4 8.2L18.8 7.2Z" fill="url(#gg1)" stroke="#a8a8a8" stroke-width=".6" stroke-linejoin="round"/><circle cx="23" cy="20.8" r="10.8" fill="url(#gg2)"/><circle cx="23" cy="20.8" r="7.5" fill="#e4e4e4" stroke="#9a9a9a" stroke-width=".6"/></svg></div>
<div class="btn" id="b7" style="left:494px;top:1004px;width:49px;background:#e1e1e1"><svg width="47" height="42" viewBox="0 0 47 42"><defs><linearGradient id="xg1" x1="0" y1="0" x2="0" y2="1"><stop offset="0" stop-color="#2b8acb"/><stop offset=".6" stop-color="#45a8e4"/><stop offset="1" stop-color="#63bdf0"/></linearGradient></defs><path d="M15.5 6.500L23.5 14.5L31.5 6.500L38.5 13.5L30.5 21.5L38.5 29.5L31.5 36.5L23.5 28.5L15.5 36.5L8.500 29.5L16.5 21.5L8.500 13.5Z" fill="url(#xg1)" stroke="#3a97d6" stroke-width=".5" stroke-linejoin="round"/></svg></div>
<div class="t ui" style="left:282px;top:1017px;">0:00:21</div>
</div>
<div class="a" id="dlg">
<div class="a" style="left:0;top:0;width:638px;height:31px;background:#fff"></div>
<div class="a" style="left:4px;top:6px;width:18px;height:18px" id="ico2"><svg width="18" height="18" viewBox="0 0 18 18"><defs><linearGradient id="ag2" x1="0" y1="0" x2="0" y2="1"><stop offset="0" stop-color="#9fcde6"/><stop offset=".52" stop-color="#5aa6d2"/><stop offset=".56" stop-color="#0f6fa0"/><stop offset="1" stop-color="#0a5c8c"/></linearGradient><clipPath id="ac2"><rect x="0" y="0" width="18" height="18" rx="3" ry="3"/></clipPath></defs><g clip-path="url(#ac2)"><rect width="18" height="10" fill="url(#ag2)"/><rect y="9.9" width="18" height="8.1" fill="#0a0a0a"/><rect x="3.9" y="1.9" width="2" height="6.9" fill="#fff"/><rect x="7.8" y="4" width="2" height="4.8" fill="#fff"/><rect x="11.9" y="6.7" width="2.2" height="2.1" fill="#fff"/><rect x="3.9" y="11.2" width="2" height="5.6" fill="#fff"/><rect x="7.8" y="11.2" width="2" height="5.6" fill="#fff"/><rect x="11.9" y="11.2" width="2.2" height="5.6" fill="#fff"/></g></svg></div>
<div class="t ttl" style="left:28px;top:7px;color:#000">HWiNFO64 Sensor Settings</div>
<svg class="a" style="left:611px;top:9px" width="12" height="12" viewBox="0 0 12 12"><path d="M0.5 0.5L11.5 11.5M11.5 0.5L0.5 11.5" stroke="#000" stroke-width="1.2" fill="none"/></svg>
<div class="a" style="left:8px;top:62px;width:621px;height:623px;background:#fff;border:1px solid #d9d9d9"></div>
<div class="a" style="left:9px;top:42px;width:56px;height:20px;background:#f0f0f0;border:1px solid #d9d9d9;border-bottom:none"></div>
<div class="t" style="left:15px;top:45px;letter-spacing:-0.3px">General</div>
<div class="a" style="left:64px;top:42px;width:50px;height:20px;background:#f0f0f0;border:1px solid #d9d9d9;border-bottom:none"></div>
<div class="t" style="left:71.3px;top:45px;letter-spacing:-0.45px">Layout</div>
<div class="a" style="left:113px;top:42px;width:56px;height:20px;background:#f0f0f0;border:1px solid #d9d9d9;border-bottom:none"></div>
<div class="t" style="left:120.5px;top:45px;letter-spacing:-0.43px">Custom</div>
<div class="a" style="left:168px;top:42px;width:84px;height:20px;background:#f0f0f0;border:1px solid #d9d9d9;border-bottom:none"></div>
<div class="t" style="left:175.5px;top:45px;letter-spacing:0px">System Tray</div>
<div class="a" style="left:251px;top:40px;width:88px;height:24px;background:#fff;border:1px solid #d9d9d9;border-bottom:none"></div>
<div class="t" style="left:259.2px;top:43px;letter-spacing:0.4px">OSD (RTSS)</div>
<div class="a" style="left:338px;top:42px;width:46px;height:20px;background:#f0f0f0;border:1px solid #d9d9d9;border-bottom:none"></div>
<div class="t" style="left:342.2px;top:45px;letter-spacing:-0.15px">Alerts</div>
<div class="a" style="left:383px;top:42px;width:87px;height:20px;background:#f0f0f0;border:1px solid #d9d9d9;border-bottom:none"></div>
<div class="t" style="left:390.2px;top:45px;letter-spacing:-0.4px">Logitech LCD</div>
<div class="a" style="left:469px;top:42px;width:102px;height:20px;background:#f0f0f0;border:1px solid #d9d9d9;border-bottom:none"></div>
<div class="t" style="left:475px;top:45px;letter-spacing:-0.25px">HWiNFO Gadget</div>
<div class="a" style="left:23px;top:78px;width:588px;height:320px;background:#fff;border:1px solid #7c7f85;overflow:hidden">
<div class="t ui" style="left:7px;top:6px;letter-spacing:-0.6px;">Entry</div>
<div class="t ui" style="left:500px;top:6px;">RivaTuner</div>
<div class="a" style="left:493px;top:0;width:1px;height:25px;background:#e5e5e5"></div>
<div class="a" style="left:563px;top:0;width:1px;height:25px;background:#e5e5e5"></div>
<div class="t ui" style="left:7px;top:28px;">CPU</div>
<div class="t" style="left:499px;top:28px;width:60px;text-align:center">No</div>
<div class="t ui" style="left:7px;top:48px;">Temp3</div>
<div class="t" style="left:499px;top:48px;width:60px;text-align:center">No</div>
<div class="t ui" style="left:7px;top:68px;">Temp4</div>
<div class="t" style="left:499px;top:68px;width:60px;text-align:center">No</div>
<div class="t ui" style="left:7px;top:88px;">Temp5</div>
<div class="t" style="left:499px;top:88px;width:60px;text-align:center">No</div>
<div class="t ui" style="left:7px;top:108px;">CPU (Weight)</div>
<div class="t" style="left:499px;top:108px;width:60px;text-align:center">No</div>
<div class="t ui" style="left:7px;top:128px;">CPU (PECI)</div>
<div class="t" style="left:499px;top:128px;width:60px;text-align:center">No</div>
<div class="t ui" style="left:7px;top:148px;">CPU</div>
<div class="t" style="left:499px;top:148px;width:60px;text-align:center">No</div>
<div class="t ui" style="left:7px;top:168px;">Temp9</div>
<div class="t" style="left:499px;top:168px;width:60px;text-align:center">No</div>
<div class="t ui" style="left:7px;top:188px;">Vcore</div>
<div class="t" style="left:499px;top:188px;width:60px;text-align:center">Yes</div>
<div class="t ui" style="left:7px;top:208px;">+5V</div>
<div class="t" style="left:499px;top:208px;width:60px;text-align:center">No</div>
<div class="t ui" style="left:7px;top:228px;">AVSB</div>
<div class="t" style="left:499px;top:228px;width:60px;text-align:center">No</div>
<div class="t ui" style="left:7px;top:248px;">3VCC</div>
<div class="t" style="left:499px;top:248px;width:60px;text-align:center">No</div>
<div class="t ui" style="left:7px;top:268px;">+12V</div>
<div class="t" style="left:499px;top:268px;width:60px;text-align:center">No</div>
<div class="t ui" style="left:7px;top:288px;">VIN8</div>
<div class="t" style="left:499px;top:288px;width:60px;text-align:center">No</div>
<div class="t ui" style="left:7px;top:308px;">3VSB_ATX</div>
<div class="t" style="left:499px;top:308px;width:60px;text-align:center">No</div>
<div class="a" style="left:565px;top:0;width:21px;height:318px;background:#f0f0f0"></div>
<div class="a" style="left:565px;top:165px;width:21px;height:21px;background:#cdcdcd"></div>
<svg class="a" style="left:570px;top:8px" width="11" height="8" viewBox="0 0 11 8"><path d="M1 6.5L5.5 2L10 6.5" stroke="#555" stroke-width="1.8" fill="none"/></svg>
<svg class="a" style="left:570px;top:302px" width="11" height="8" viewBox="0 0 11 8"><path d="M1 1.5L5.5 6L10 1.5" stroke="#555" stroke-width="1.8" fill="none"/></svg>
</div>
<div class="t ui" style="left:32px;top:413px;letter-spacing:-0.17px;">OSD Status: Not Running</div>
<div class="cb" style="left:32px;top:450px"></div>
<div class="t ui" style="left:51px;top:451px;letter-spacing:-0.17px;color:#6d6d6d">Show value in OSD</div>
<div class="cb" style="left:32px;top:474px"></div>
<div class="t ui" style="left:51px;top:475px;letter-spacing:-0.12px;color:#6d6d6d">Show label in OSD</div>
<div class="cb" style="left:169px;top:474px"></div>
<div class="t ui" style="left:188px;top:475px;letter-spacing:-0.22px;color:#6d6d6d">Units in superscript</div>
<div class="cb" style="left:32px;top:498px"></div>
<div class="t ui" style="left:51px;top:499px;letter-spacing:-0.11px;color:#6d6d6d">Show raw value only (no units)</div>
<div class="t ui" style="left:32px;top:525px;letter-spacing:-0.23px;">Align digits:</div>
<div class="cmb" style="left:148px;top:520px;width:74px;height:24px"></div>
<div class="t ui" style="left:32px;top:551px;letter-spacing:-0.2px;">Show value type:</div>
<div class="cmb" style="left:148px;top:546px;width:126px;height:24px"></div>
<svg class="a" style="left:206px;top:529px" width="11" height="7" viewBox="0 0 11 7"><path d="M1 1L5.5 5.5L10 1" stroke="#a0a0a0" stroke-width="1" fill="none"/></svg>
<svg class="a" style="left:258px;top:555px" width="11" height="7" viewBox="0 0 11 7"><path d="M1 1L5.5 5.5L10 1" stroke="#a0a0a0" stroke-width="1" fill="none"/></svg>
<div class="gb" style="left:32px;top:588px;width:205px;height:87px"></div>
<div class="t" style="left:39px;top:581px;background:#fff;padding:0 3px;letter-spacing:-.1px">Toggle OSD output</div>
<div class="cb" style="left:43px;top:608px;border-color:#333"></div>
<div class="t ui" style="left:62px;top:609px;letter-spacing:-0.3px;">Enable hotkey for toggling</div>
<div class="t ui" style="left:43px;top:643px;letter-spacing:-0.43px;">Hot Key</div>
<div class="inp" style="left:106px;top:640px;width:117px;height:24px;border-color:#7a7a7a;background:#f0f0f0"></div>
<div class="t ui" style="left:109px;top:644px;color:#8a8a8a">Нет</div>
<div class="gb" style="left:305px;top:420px;width:284px;height:51px"></div>
<div class="t" style="left:312px;top:413px;background:#fff;padding:0 3px;letter-spacing:-.26px">Position</div>
<div class="t ui" style="left:316px;top:447px;letter-spacing:-0.2px;">Line:</div>
<div class="cmb" style="left:358px;top:438px;width:53px;height:24px"></div>
<svg class="a" style="left:395px;top:447px" width="11" height="7" viewBox="0 0 11 7"><path d="M1 1L5.5 5.5L10 1" stroke="#a0a0a0" stroke-width="1" fill="none"/></svg>
<div class="t ui" style="left:442px;top:445px;letter-spacing:-0.41px;">Column:</div>
<div class="cmb" style="left:494px;top:436px;width:53px;height:24px"></div>
<svg class="a" style="left:531px;top:445px" width="11" height="7" viewBox="0 0 11 7"><path d="M1 1L5.5 5.5L10 1" stroke="#a0a0a0" stroke-width="1" fill="none"/></svg>
<div class="cb" style="left:316px;top:486px"></div>
<div class="t ui" style="left:335px;top:487px;letter-spacing:-0.18px;color:#6d6d6d">Use color:</div>
<div class="a" style="left:401px;top:477px;width:33px;height:34px;background:#e3e3e3;border:3px solid #cacaca"></div>
<div class="gb" style="left:305px;top:528px;width:284px;height:123px"></div>
<div class="t" style="left:312px;top:521px;background:#fff;padding:0 3px;letter-spacing:-.33px">OSD Graph</div>
<div class="cb" style="left:316px;top:547px"></div>
<div class="t ui" style="left:335px;top:547px;letter-spacing:-0.15px;color:#6d6d6d">Show graph</div>
<div class="t ui" style="left:316px;top:573px;letter-spacing:-0.2px;">Width:</div>
<div class="t ui" style="left:316px;top:597px;letter-spacing:-0.2px;">Margin:</div>
<div class="t ui" style="left:316px;top:621px;letter-spacing:-0.15px;">Y Min:</div>
<div class="t ui" style="left:452px;top:573px;letter-spacing:-0.44px;">Height:</div>
<div class="t ui" style="left:452px;top:621px;letter-spacing:-0.23px;">Y Max:</div>
<div class="inp" style="left:373px;top:568px;width:63px;height:24px"></div>
<div class="t" style="left:373px;top:572px;width:56.5px;text-align:right;color:#6d6d6d">0</div>
<div class="inp" style="left:373px;top:592px;width:63px;height:24px"></div>
<div class="t" style="left:373px;top:596px;width:56.5px;text-align:right;color:#6d6d6d">0</div>
<div class="inp" style="left:373px;top:616px;width:63px;height:24px"></div>
<div class="t" style="left:373px;top:620px;width:56.5px;text-align:right;color:#6d6d6d">0</div>
<div class="inp" style="left:510px;top:568px;width:63px;height:24px"></div>
<div class="t" style="left:510px;top:572px;width:56.5px;text-align:right;color:#6d6d6d">0</div>
<div class="inp" style="left:510px;top:616px;width:63px;height:24px"></div>
<div class="t" style="left:510px;top:620px;width:56.5px;text-align:right;color:#6d6d6d">0</div>
<div class="a" style="left:355px;top:695px;width:86px;height:26px;background:#e1e1e1;border:2px solid #0078d7"></div>
<div class="t" style="left:355px;top:702px;width:86px;text-align:center">OK</div>
<div class="a" style="left:450px;top:695px;width:86px;height:26px;background:#e1e1e1;border:1px solid #adadad"></div>
<div class="t" style="left:450px;top:702px;width:86px;text-align:center">Отмена</div>
</div>
</body></html>
